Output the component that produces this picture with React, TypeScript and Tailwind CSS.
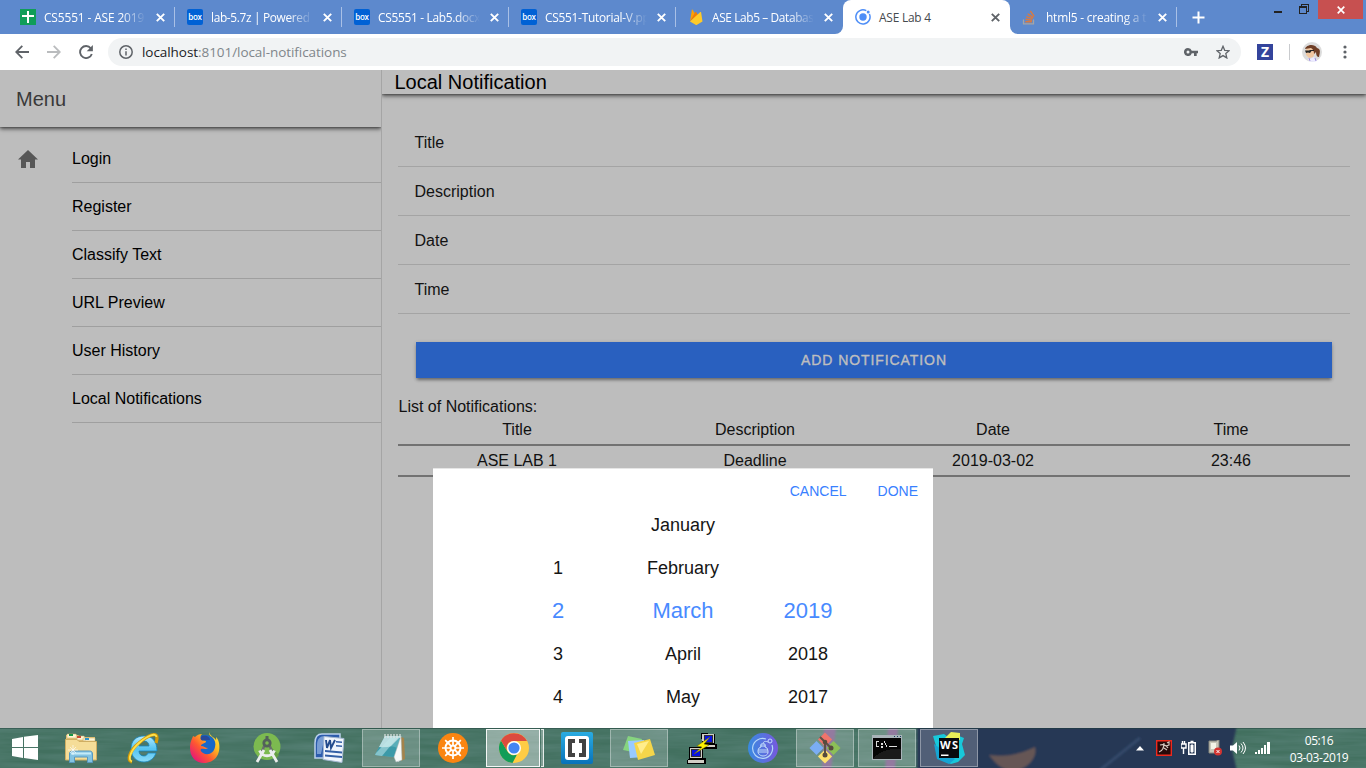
import React from "react";

const UI = "font-['Open_Sans','Noto_Sans',sans-serif]";

/* ---------- Tab icons ---------- */

function SheetsIcon() {
  return (
    <svg width="16" height="16" viewBox="0 0 16 16" shapeRendering="crispEdges">
      <rect width="16" height="16" rx="1" fill="#0f9d58" />
      <path d="M2 6h12v2H2zM7 2h2v12H7z" fill="#fff" />
    </svg>
  );
}

function BoxIcon() {
  return (
    <span className="flex h-4 w-4 items-center justify-center rounded-[2px] bg-[#0061d5] pb-px font-['Open_Sans',sans-serif] text-[8px] font-semibold leading-none tracking-[-0.2px] text-white">
      box
    </span>
  );
}

function FirebaseIcon() {
  return (
    <svg width="16" height="16" viewBox="0 0 16 16">
      <path d="M2 12.5 3.900.8c.1-.4.500-.4.700-.1l2.200 3.900z" fill="#ffa000" />
      <path d="M2 12.500 7.400 3c.2-.3.500-.3.700 0L10 6z" fill="#f57c00" />
      <path d="m2 12.500 10.300-9.400c.3-.3.700-.1.800.2L14.500 12.500 9 15.700c-.5.3-1 .3-1.400 0z" fill="#ffca28" />
    </svg>
  );
}

function IonicIcon() {
  return (
    <svg width="16" height="16" viewBox="0 0 16 16">
      <path d="M11.300 1.700A7.100 7.100 0 1 0 14.400 5" fill="none" stroke="#4e8ef7" strokeWidth="1.500" />
      <circle cx="8" cy="8" r="3.700" fill="#4e8ef7" />
      <circle cx="13.200" cy="2.900" r="1.500" fill="#4e8ef7" />
    </svg>
  );
}

function StackIcon() {
  return (
    <svg width="16" height="16" viewBox="0 0 16 16" fill="none">
      <path d="M1.500 10.500v4.300h10v-4.300" stroke="#a5a5a5" strokeWidth="1.300" />
      <path d="M3.300 12.700h6.600M3.500 10.300l6.600.9M4.200 7.700l6.400 2M5.700 4.700l5.600 3.900M8.300 1.800l3.900 5.600" stroke="#dc7a3e" strokeWidth="1.400" />
    </svg>
  );
}

/* ---------- Browser chrome ---------- */

function Cross({ color, size = 9 }: { color: string; size?: number }) {
  return (
    <svg width={size} height={size} viewBox="0 0 9 9">
      <path d="M.8.800l7.400 7.400M8.200.8.800 8.200" stroke={color} strokeWidth="1.900" />
    </svg>
  );
}

function Tab({ icon, title, tracking = "tracking-[-0.2px]", fade = true, active = false, separator = true }: {
  icon: React.ReactNode; title: string; tracking?: string; fade?: boolean; active?: boolean; separator?: boolean;
}) {
  return (
    <div className={"flex h-[34px] w-[167px] shrink-0 items-center pl-3 " + (active ? "rounded-t-lg bg-white" : "")}>
      <span className="w-6 shrink-0">{icon}</span>
      <span
        className={
          "w-[102px] shrink-0 whitespace-nowrap text-[11.9px] leading-4 " + tracking + " " +
          (fade ? "[mask-image:linear-gradient(to_right,#000_76%,transparent_100%)] " : "") +
          (active ? "text-[#45494d]" : "text-white")
        }
      >
        {title}
      </span>
      <span className="ml-[10px] shrink-0"><Cross color={active ? "#5f6368" : "#fff"} /></span>
      {separator && <span className="ml-[9px] h-5 w-px shrink-0 bg-[#a9c0e6]" />}
    </div>
  );
}

function TabStrip() {
  return (
    <div className="flex h-[34px] bg-[#5d89cd]">
      <div className="flex items-center pl-2">
        <Tab icon={<SheetsIcon />} title="CS5551 - ASE 2019" tracking="tracking-[-0.12px]" />
        <Tab icon={<BoxIcon />} title="lab-5.7z | Powered b" tracking="tracking-[-0.34px]" />
        <Tab icon={<BoxIcon />} title="CS5551 - Lab5.docx" tracking="tracking-[-0.3px]" />
        <Tab icon={<BoxIcon />} title="CS551-Tutorial-V.pp" tracking="tracking-[-0.26px]" />
        <div className="bg-white">
          <div className="rounded-br-lg bg-[#5d89cd]">
            <Tab icon={<FirebaseIcon />} title="ASE Lab5 – Databas" tracking="tracking-[-0.38px]" separator={false} />
          </div>
        </div>
        <div className="bg-[#5d89cd]">
          <Tab icon={<IonicIcon />} title="ASE Lab 4" active fade={false} separator={false} />
        </div>
        <div className="bg-white">
          <div className="rounded-bl-lg bg-[#5d89cd]">
            <Tab icon={<StackIcon />} title="html5 - creating a t" />
          </div>
        </div>
        <svg className="ml-[15px]" width="13" height="13" viewBox="0 0 13 13">
          <path d="M6.500.5v12M.5 6.500h12" stroke="#fff" strokeWidth="2" />
        </svg>
      </div>
      <div className="ml-auto flex items-start pr-[3px]">
        <span className="mr-[17px] mt-[11px] h-[2px] w-2 bg-[#222]" />
        <svg className="mr-[9px] mt-1" width="10" height="10" viewBox="0 0 10 10" fill="none" stroke="#222" shapeRendering="crispEdges">
          <path d="M.5 2.500h7v7h-7zM0 3.500h8M2.500 2V.5h7v7H8" />
        </svg>
        <span className="flex h-[19px] w-[45px] items-center justify-center bg-[#c75050]"><Cross color="#fff" size={8} /></span>
      </div>
    </div>
  );
}

function AddressBar() {
  return (
    <div className="flex h-9 items-center bg-white text-[#5f6368]">
      <svg className="ml-[15px]" width="14" height="14" viewBox="0 0 14 14" fill="none" stroke="#5f6368" strokeWidth="1.800">
        <path d="M14 7H1.500M7.300.8 1.200 7l6.100 6.200" />
      </svg>
      <svg className="ml-[18px]" width="14" height="14" viewBox="0 0 14 14" fill="none" stroke="#babcbe" strokeWidth="1.800">
        <path d="M0 7h12.500M6.700.8 12.800 7l-6.100 6.200" />
      </svg>
      <svg className="ml-[18px]" width="14" height="14" viewBox="0 0 14 14">
        <path d="M11.800 3.300A6 6 0 1 0 12.800 9" fill="none" stroke="#5f6368" strokeWidth="1.900" />
        <path d="M13.900 0v6.200H7.700z" fill="#5f6368" />
      </svg>
      <div className="ml-[15px] flex h-7 w-[1133px] items-center rounded-full bg-[#f1f3f4] pl-[11px]">
        <svg width="14" height="14" viewBox="0 0 14 14" fill="none" stroke="#5f6368" strokeWidth="1.500">
          <circle cx="7" cy="7" r="6.200" />
          <path d="M7 6.200v4.300M7 3.500V5" />
        </svg>
        <span className="ml-[9px] text-[13.500px] leading-5 tracking-[-0.06px] text-[#80868b]">
          <span className="text-[#202124]">localhost</span>:8101/local-notifications
        </span>
        <svg className="ml-auto" width="14" height="8" viewBox="0 0 14 8">
          <path fillRule="evenodd" d="M4 0a4 4 0 1 0 3.800 5.200H10V8h2.700V5.200H14V2.700H7.800A4 4 0 0 0 4 0zm0 2.500a1.500 1.500 0 1 1 0 3 1.500 1.500 0 0 1 0-3z" fill="#5f6368" />
        </svg>
        <svg className="ml-[18px] mr-[11px]" width="14" height="14" viewBox="0 0 14 14">
          <path d="m7 1.300 1.700 4 4.400.4-3.300 2.900 1 4.300L7 10.600l-3.800 2.300 1-4.300L.9 5.700l4.400-.4z" fill="none" stroke="#5f6368" strokeWidth="1.300" />
        </svg>
      </div>
      <span className="ml-4 flex h-4 w-4 items-center justify-center bg-[#34449c] text-[14px] font-bold leading-none text-white">Z</span>
      <span className="ml-4 h-4 w-px bg-[#c9cbce]" />
      <svg className="ml-3" width="20" height="20" viewBox="0 0 20 20">
        <circle cx="10" cy="10" r="10" fill="#dcdcdc" />
        <path d="M4 8c0-2 2-4 5-4 4 0 5 4 4 7l-2 4-4 1-3-3z" fill="#f1c7a1" />
        <path d="M3 7c1-4 9-6 12-1 4 1 3 4 2 9-2 0-3-2-3-5l-2 2c0-3-1-5-3-6-2 0-4 1-6 1z" fill="#6f3e26" />
        <path d="M3 8.500h4l1-.5h4v1H9.500L8 11l-2-.5-2 .5z" fill="#252525" />
        <path d="m6 16 2 1 4-2 3 4a10 10 0 0 1-8 0z" fill="#ecebff" />
        <path d="m7 16 1 3m5-3 1 3" stroke="#9a8bdc" />
      </svg>
      <svg className="ml-[21px]" width="4" height="14" viewBox="0 0 4 14" fill="#5f6368">
        <circle cx="2" cy="2" r="1.600" /><circle cx="2" cy="7" r="1.600" /><circle cx="2" cy="12" r="1.600" />
      </svg>
    </div>
  );
}

/* ---------- Application page ---------- */

const menu = ["Login", "Register", "Classify Text", "URL Preview", "User History", "Local Notifications"];

const headerShadow = "shadow-[0_2px_4px_rgba(0,0,0,0.6),0_1px_1px_rgba(0,0,0,0.12)] [clip-path:inset(0_0_-12px_0)]";

function SideMenu() {
  return (
    <aside className="h-full w-[382px] shrink-0 border-r border-[#a5a5a5]">
      <div className={"flex h-[57px] items-center bg-[#bdbdbd] pl-4 text-[20px] text-[#393939] " + headerShadow}>Menu</div>
      <ul className="pt-2">
        {menu.map((item, i) => (
          <li key={item} className="flex h-12">
            <span className="w-[72px] shrink-0 pl-[18px] pt-[15px]">
              {i === 0 && (
                <svg width="20" height="18" viewBox="0 0 20 18"><path d="M10 0 0 9.500h3V18h5v-6h4v6h5V9.500h3z" fill="#575757" /></svg>
              )}
            </span>
            <span className="flex flex-1 items-center border-b border-[#9f9f9f] text-black">{item}</span>
          </li>
        ))}
      </ul>
    </aside>
  );
}

const rows = [
  ["Title", "Description", "Date", "Time"],
  ["ASE LAB 1", "Deadline", "2019-03-02", "23:46"],
];

function Notifications() {
  return (
    <main className="flex-1">
      <div className={"h-6 bg-[#bdbdbd] pl-[12.500px] text-[20px] leading-[25px] text-black " + headerShadow}>Local Notification</div>
      <div className="px-4 pt-6">
        {rows[0].map((label) => (
          <div key={label} className="flex h-[49px] items-center border-b border-[#a4a4a4] pl-[16.500px] pt-[2px] text-[#131313]">{label}</div>
        ))}
        <button className="mt-7 ml-[18px] block h-9 w-[916px] bg-[#2960bf] text-[14px] font-medium tracking-[0.92px] text-[#bebebe] shadow-[0_3px_3px_-1px_rgba(0,0,0,0.35),0_1px_4px_rgba(0,0,0,0.2)]">
          <span className="[-webkit-text-stroke:0.4px_#bebebe]">ADD NOTIFICATION</span>
        </button>
        <p className="mt-5 h-[17px] pl-[0.500px] leading-[18px] text-[#111]">List of Notifications:</p>
        {rows.map((row) => (
          <div key={row[0]} className="grid h-[31px] grid-cols-4 border-b-2 border-[#727272] text-center leading-[29px] text-[#111]">
            {row.map((cell) => <span key={cell}>{cell}</span>)}
          </div>
        ))}
      </div>
    </main>
  );
}

const columns = [
  { values: ["", "1", "2", "3", "4"] },
  { values: ["January", "February", "March", "April", "May"] },
  { values: ["", "", "2019", "2018", "2017"] },
];

function DatePicker() {
  return (
    <div className="absolute left-[433px] top-[398px] h-[260px] w-[500px] overflow-hidden border-t border-[#e6e6e6] bg-white">
      <div className="flex h-[34px] items-center justify-end gap-[31px] pr-[15px] pt-[10px] text-[14px] text-[#3880ff]">
        <span>CANCEL</span><span>DONE</span>
      </div>
      <div className="grid grid-cols-[125px_125px_125px] justify-center text-center text-[18px] text-[#151515]">
        {columns.map((column, c) => (
          <div key={c}>
            {column.values.map((value, i) => (
              <div key={i} className={"h-[43px] " + (i === 2 ? "text-[22px] leading-[43px] text-[#488aff]" : "leading-[45px]")}>{value}</div>
            ))}
          </div>
        ))}
      </div>
    </div>
  );
}

/* ---------- Taskbar icons ---------- */

const icons: Record<string, React.ReactNode> = {
  explorer: (
    <svg width="32" height="30" viewBox="0 0 32 30">
      <path d="M1 2h12l2 2h15v21H1z" fill="#e4c475" />
      <path d="M2 1h9l2 4H2zM11 3h8l2 4h-9zM18 5h12v3H18z" fill="#fff6d5" stroke="#c9aa64" strokeWidth=".5" />
      <path d="M4 1h4v2H4z" fill="#149647" /><path d="M12 3h4v2h-4z" fill="#cb4a32" /><path d="M20 5h4v2h-4z" fill="#2e92c9" />
      <path d="M.5 6.500H12l2 2h17.500V27H.5z" fill="#f5dd98" stroke="#cfae62" />
      <path d="M4.500 29.500V21c0-2 1-3 3-3h17c2 0 3 1 3 3v8.500h-5V24h-13v5.500z" fill="#83c3e2" stroke="#5898be" />
      <path d="M6 20.500h20" stroke="#c5ebf8" strokeWidth="2" />
      <path d="M8 12v10M3 17h10M5 14l6 6m0-6-6 6" stroke="#fff" strokeOpacity=".8" strokeWidth=".8" />
    </svg>
  ),
  ie: (
    <svg width="32" height="32" viewBox="0 0 32 32">
      <defs><linearGradient id="ieb" x2="0" y2="1"><stop stopColor="#b4eafd" /><stop offset=".5" stopColor="#54c3f1" /><stop offset="1" stopColor="#8bdbf8" /></linearGradient></defs>
      <path fillRule="evenodd" d="M17 4C9 4 4 9 4 17c0 7 5 13 13 13 5 0 10-3 12-9h-8c-1 2-2 3-4 3-3 0-5-2-5-5h18C30 9 25 4 17 4zm-5 10c.5-3 2-5 5-5s5 2 5 5z" fill="url(#ieb)" stroke="#1686bf" strokeWidth=".8" />
      <path d="M5 30c-6-1-2-12 7-19C20 4 30-1 30 6c0 2-.5 3-1 5" fill="none" stroke="#d49b08" strokeWidth="3.200" />
      <path d="M5 29.500C0 28 4 18 12 11 20 4 29 0 29.500 5" fill="none" stroke="#ffe04b" strokeWidth="1.800" />
    </svg>
  ),
  firefox: (
    <svg width="32" height="32" viewBox="0 0 32 32">
      <defs><linearGradient id="ff" x1="1" x2=".1" y1="0" y2=".9"><stop stopColor="#fff34a" /><stop offset=".35" stopColor="#ffbd20" /><stop offset=".65" stopColor="#ff5930" /><stop offset="1" stopColor="#e4137c" /></linearGradient></defs>
      <circle cx="16" cy="15" r="12" fill="#1768c9" />
      <path d="M20 0c0 3 1 4 3 5 3 3 4 6 3 10-1 6-7 9-12 6-2-1-3-3-2-4 2-1 4 1 7-1-3 0-4-2-7-2 0-3 5-2 5-5l-4-1c-2-2-2-4 0-6-3 0-5 1-7 3L4 4C3 7 1 10 1 16c0 9 6 15 14 15 11 0 17-9 15-20-.5-3-2-5-3-6 0 1 .5 2 0 3-2-3-6-4-7-8z" fill="url(#ff)" />
      <path d="M13 4c5-1 8 1 8 4h-3l-5 .5c-2-1-2-3 0-4.500z" fill="#284a9b" />
    </svg>
  ),
  android: (
    <svg width="28" height="32" viewBox="0 0 28 32">
      <circle cx="14" cy="14.500" r="13.500" fill="#7cba50" />
      <path d="m17 14 9 9-3 4-6-7z" fill="#659d43" />
      <path d="m12 12-4 10M16 12l4 10" stroke="#68706b" strokeWidth="2.500" />
      <path d="m11 18-7 12M17 18l7 12M6.500 18.500c3 7 12 7 15 0" fill="none" stroke="#eceeed" strokeWidth="2.800" />
      <circle cx="14" cy="11" r="3.200" fill="#7cba50" stroke="#53615a" strokeWidth="2.800" /><path d="M12.500 4h3v4h-3z" fill="#53615a" />
    </svg>
  ),
  word: (
    <svg width="31" height="32" viewBox="0 0 31 32">
      <path d="M8 2h18v24H1V11c0-5 2-9 7-9z" fill="#2c5cac" stroke="#b9d0ec" strokeWidth="1.500" />
      <path d="M3 13c0-6 3-9 8-9L7 22H3z" fill="#789dd3" />
      <path d="m10 4.500 20 2-2 24-19-3z" fill="#f0f5fc" stroke="#a2b7d1" />
      <path d="m12 8 1 8 3-8 1 8 4-8" fill="none" stroke="#234b8c" strokeWidth="1.900" />
      <path d="m22 9 6 .5V11l-6-.5zm0 4 6 .5V15l-6-.5zm-11 5 17 1.500v2L11 20zm0 4.500L28 24v2l-17-1.500z" fill="#335fa5" />
    </svg>
  ),
  notepad: (
    <svg width="34" height="32" viewBox="0 0 34 32">
      <path d="m27 5 3 1 1 21-4 2z" fill="#a4834b" /><path d="m26 5 1 23-3 2-2-3z" fill="#e5ebea" />
      <path d="M11 4h16l-7 21L1 23z" fill="#5aaeb9" /><path d="M11 4h16L16 15 5 15z" fill="#b9dde0" />
      <path d="M5 15c5 3 10-3 18 1l-3 9-19-2z" fill="#3c9aa8" />
      <path d="M2 21 16 6h7L8 24l-7-1z" fill="#c1e8e9" fillOpacity=".55" />
      <path d="m27 4 1 24-6 2-2-5z" fill="#f7f8f7" stroke="#a8b6b7" strokeWidth=".5" />
      <path d="M11 2v4m3-4v4m3-4v4m3-4v4m3-4v4m3-4v4" stroke="#e0e7e5" strokeWidth="1.200" />
    </svg>
  ),
  wheel: (
    <svg width="30" height="30" viewBox="0 0 30 30">
      <circle cx="15" cy="15" r="15" fill="#fa8511" />
      <g fill="none" stroke="#fff"><circle cx="15" cy="15" r="7.500" strokeWidth="2" /><circle cx="15" cy="15" r="2.500" strokeWidth="2" /><path d="M15 4v8m0 6v8M4 15h8m6 0h8M7.200 7.200l6 6m3.600 3.600 6 6m0-15.600-6 6m-3.600 3.600-6 6" strokeWidth="1.700" /></g>
    </svg>
  ),
  chrome: (
    <svg width="30" height="30" viewBox="0 0 30 30">
      <circle cx="15" cy="15" r="15" fill="#fc4" />
      <path d="M2 7.500 8.500 18.500A7 7 0 0 0 18 21.500L13.500 30A15 15 0 0 1 2 7.500z" fill="#129d58" />
      <path d="M2 7.500A15 15 0 0 1 28 8H15a7 7 0 0 0-6.500 10.500z" fill="#dc4b3e" />
      <circle cx="15" cy="15" r="7" fill="#fff" /><circle cx="15" cy="15" r="5.600" fill="#4285f4" />
    </svg>
  ),
  brackets: (
    <svg width="32" height="32" viewBox="0 0 32 32">
      <defs><linearGradient id="br" x2="0" y2="1"><stop stopColor="#29ace2" /><stop offset="1" stopColor="#0872b9" /></linearGradient></defs>
      <rect width="32" height="32" rx="2" fill="url(#br)" /><rect x="4" y="4" width="24" height="24" rx="3" fill="#fff" />
      <path d="M7 7h7v4h-3v10h3v4H7zm11 0h7v18h-7v-4h3V11h-3z" fill="#424242" />
    </svg>
  ),
  sticky: (
    <svg width="32" height="26" viewBox="0 0 32 26">
      <path d="m5 1 14 3-4 14-15-3z" fill="#86d47f" /><path d="m5 6 16-1 1 17-15 1z" fill="#98caff" />
      <path d="m11 8 16-4 5 16-17 5z" fill="#f5d64a" /><path d="m14 9 12-3-8 13z" fill="#ffed8c" />
    </svg>
  ),
  putty: (
    <svg width="31" height="32" viewBox="0 0 31 32" shapeRendering="crispEdges">
      <path d="m15 1 14 1v10h2v5H16l-3-3 3-2z" fill="#000" /><path d="M16 2h12v9h-9l-3-2zM15 13h14v2H15z" fill="#d0cec5" /><path d="M18 3h8v7h-8z" fill="#0712e2" stroke="#333" />
      <path d="M3 15h14v11h3v6H1v-4l2-2z" fill="#000" /><path d="M4 16h12v10H4zM2 28h16v3H2z" fill="#d0cec5" /><path d="M5 17h9v7H5z" fill="#0712e2" stroke="#333" />
      <path d="M24 5 11 14l5 1-8 7 15-9-5-1z" fill="#fff200" stroke="#6b6700" strokeWidth=".5" shapeRendering="auto" />
    </svg>
  ),
  bomb: (
    <svg width="30" height="30" viewBox="0 0 30 30" fill="none">
      <defs><linearGradient id="bo"><stop stopColor="#398be0" /><stop offset="1" stopColor="#7659dd" /></linearGradient></defs>
      <circle cx="15" cy="15" r="15" fill="url(#bo)" />
      <path d="M18 6a10 10 0 1 0 6 6" stroke="#b4d6f7" strokeWidth="1.200" /><circle cx="22" cy="8" r="2" stroke="#c6e0ff" />
      <path d="M13 11h4v3l2 1c3 6-1 8-4 8s-7-3-4-8l2-1zM10 17h10M10 19h10M12 13h6M15 11c0-3 3-3 5-2" stroke="#c3dcfa" />
    </svg>
  ),
  git: (
    <svg width="34" height="34" viewBox="0 0 34 34">
      <g transform="rotate(45 17 17)"><path d="M6 6h10v10H6z" fill="#f0746b" /><path d="M18 6h10v10H18z" fill="#8cc057" /><path d="M6 18h10v10H6z" fill="#7badf3" /><path d="M18 18h10v10H18z" fill="#ffe16d" /></g>
      <path d="m12 6 5 5v14M17 11l6 6" fill="none" stroke="#5d5145" strokeWidth="2" /><g fill="#574b3e"><circle cx="17" cy="11" r="2.300" /><circle cx="23" cy="17" r="2.500" /><circle cx="17" cy="24" r="2.500" /></g>
    </svg>
  ),
  cmd: (
    <svg width="30" height="25" viewBox="0 0 30 25" shapeRendering="crispEdges">
      <path d="M0 0h30v25H0z" fill="#a9b4b9" /><path d="M1 3h28v21H1z" fill="#050505" /><path d="M22 1h1v1h-1zm3 0h1v1h-1zm3 0h1v1h-1z" fill="#193e61" />
      <path d="M7 6.500H4.500v5H7M9 8h1v1H9zm0 3h1v1H9zM12 6l3 6M17 11.500h8" fill="none" stroke="#ddd" />
      <path d="M1 24c5-7 16-11 28-10v10z" fill="#1a1a1a" />
    </svg>
  ),
  webstorm: (
    <svg width="32" height="32" viewBox="0 0 32 32">
      <path d="m0 4 11-2 4 3 6-3 10 4-2 6 3 11-7 7-7 2-11-5z" fill="#18c8da" />
      <path d="m12 6 6-6 9 1v7z" fill="#e9ef57" /><path d="m1 12 3 15 12 5 6-5z" fill="#15a5d4" />
      <path d="M6 6h20v20H6z" fill="#080a0d" /><path d="M8 22.500h7.500V24H8z" fill="#fff" />
      <text x="7" y="16.500" fontFamily="Open Sans" fontWeight="700" fontSize="11" textLength="18" fill="#fff">WS</text>
    </svg>
  ),
};

const tasks = [
  { id: "explorer" }, { id: "ie" }, { id: "firefox" }, { id: "android" }, { id: "word" },
  { id: "notepad", open: true }, { id: "wheel" }, { id: "chrome", current: true }, { id: "brackets" },
  { id: "sticky", open: true }, { id: "putty" }, { id: "bomb" }, { id: "git", open: true },
  { id: "cmd", open: true }, { id: "webstorm", open: true },
];

function Scenery() {
  return (
    <svg className="absolute inset-0" width="1366" height="40" viewBox="0 0 1366 40">
      <defs>
        <filter id="grain" x="0" y="0" width="1" height="1">
          <feTurbulence type="fractalNoise" baseFrequency=".014 .18" numOctaves="3" seed="4" />
          <feColorMatrix values="0 0 0 0 .12  0 0 0 0 .25  0 0 0 0 .22  .9 0 0 0 -.2" />
        </filter>
        <filter id="soft"><feGaussianBlur stdDeviation="1.200" /></filter>
      </defs>
      <rect width="1366" height="40" fill="#42705f" />
      <rect width="1366" height="40" filter="url(#grain)" />
      <g filter="url(#soft)">
        <path d="M917-3h320l-5 24 5 22H917z" fill="#283955" />
        <path d="M989 27c17 2 29 0 46-8 3 12-10 24-24 24-11-3-16-8-22-16z" fill="#665655" />
        <path d="M824 0h12l-5 42h-9zM888 0h10l-3 42h-10z" fill="#785a88" />
        <path d="m1140 10-40 32" stroke="#34486b" strokeWidth="3" />
      </g>
      <path d="M0 .5h1366" stroke="#203f3a" strokeOpacity=".45" />
    </svg>
  );
}

function Tray() {
  return (
    <div className="relative ml-auto flex items-center pr-[17px] text-white">
      <svg className="mr-3" width="8" height="5" viewBox="0 0 8 5"><path d="m4 0 4 4.500H0z" fill="#fff" /></svg>
      <svg className="mr-[9px]" width="16" height="16" viewBox="0 0 16 16"><path d="M.7.700h14.600v14.600H.7z" fill="#270a0a" stroke="#ed281d" strokeWidth="1.400" /><path d="M3 12c3-1 5-4 5-9M4 5c3-1 6 0 8 3M8 8l3 2M11 3l2-1v3l-3 1" fill="none" stroke="#d6c7c1" strokeWidth="1.200" /></svg>
      <svg className="mr-3" width="15" height="16" viewBox="0 0 15 16" fill="none" stroke="#fff"><path d="M0 4h5v4H0zM1.500 1v3m2-3v3M2.500 8v6" strokeWidth="1.400" /><path d="M7.750 2.750h6.500v11.500h-6.500zM9.500 1.500h3" strokeWidth="1.500" /><path d="M10 5h2v7h-2z" fill="#fff" /></svg>
      <svg className="mr-2" width="14" height="16" viewBox="0 0 14 16"><path d="M1 1h8V0h2v13H1z" fill="#c9c8ba" stroke="#85857c" /><path d="M3 3h5v6H3z" fill="#f4f4e7" /><circle cx="10" cy="11.500" r="4" fill="#d33431" /><path d="m8.500 10 3 3m0-3-3 3" stroke="#fff" /></svg>
      <svg className="mr-[9px]" width="16" height="14" viewBox="0 0 16 14"><path d="M0 4.500h3L7 1v12L3 9.500H0z" fill="#fff" /><path d="M9 4.500q2 2.500 0 5m2-7q4 4.500 0 9m2-10.500q5 6 0 12" fill="none" stroke="#fff" /></svg>
      <svg className="mr-[18px]" width="16" height="12" viewBox="0 0 16 12" fill="#fff" shapeRendering="crispEdges"><path d="M0 10h2v2H0zM3 8h2v4H3zM6 6h2v6H6zM9 3h2v9H9zM12 0h3v12h-3z" /></svg>
      <div className="w-[60px] whitespace-nowrap pt-px text-center text-[12px] leading-[17px] tracking-[-0.4px]"><div>05:16</div><div>03-03-2019</div></div>
    </div>
  );
}

function Taskbar() {
  return (
    <footer className="relative flex h-10 overflow-hidden bg-[#42705f]">
      <Scenery />
      <div className="relative flex w-[50px] shrink-0 items-center pb-px pl-3">
        <svg width="26" height="25" viewBox="0 0 26 25"><path d="m0 4 11-2v10H0zM12 1.800 26 0v12H12zM0 13h11v10L0 21zM12 13h14v12l-14-2z" fill="#fff" /></svg>
      </div>
      {tasks.map((task) => (
        <div key={task.id} className="relative flex h-10 w-[62px] shrink-0 items-center justify-center">
          {task.open && <div className="flex h-[38px] w-[58px] items-center justify-center border border-white/35 bg-white/20 pb-px">{icons[task.id]}</div>}
          {task.current && (
            <div className="flex h-[38px] w-[58px] gap-px">
              <div className="flex w-[54px] items-center justify-center border border-white/90 bg-white/40 pl-px">{icons[task.id]}</div>
              <div className="w-[3px] border border-l-0 border-white/80 bg-white/30" />
            </div>
          )}
          {!task.open && !task.current && <span className="pb-[1px]">{icons[task.id]}</span>}
        </div>
      ))}
      <Tray />
    </footer>
  );
}

export default function App() {
  return (
    <div className={"flex h-[768px] w-[1366px] flex-col overflow-hidden " + UI}>
      <TabStrip />
      <AddressBar />
      <div className="relative flex h-[658px] bg-[#bdbdbd] font-['Liberation_Sans',Arial,sans-serif] text-[16px]">
        <SideMenu />
        <Notifications />
        <DatePicker />
      </div>
      <Taskbar />
    </div>
  );
}
